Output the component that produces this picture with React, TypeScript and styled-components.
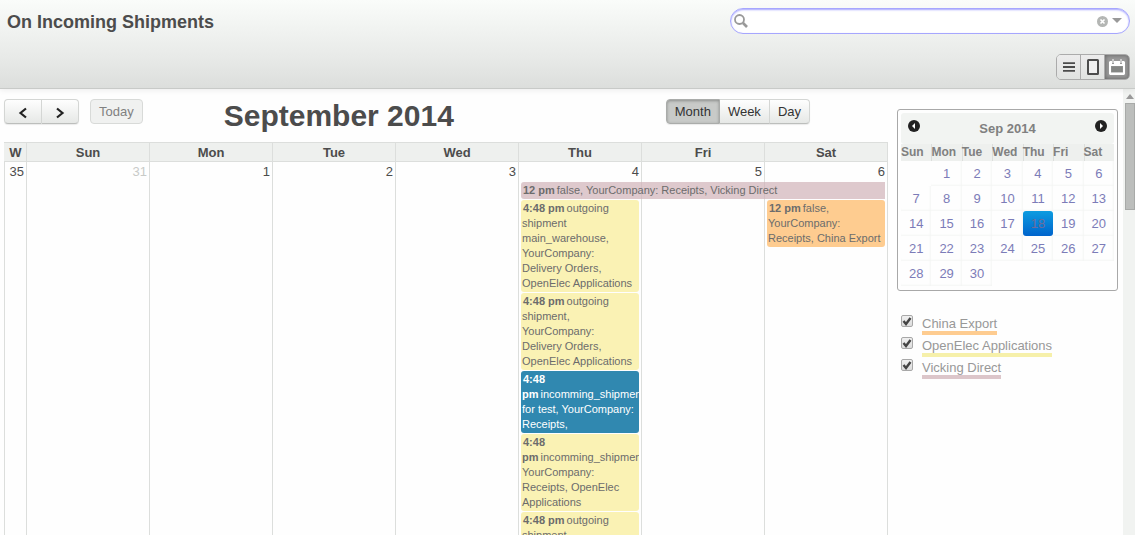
import React from "react";
import styled, { createGlobalStyle, css } from "styled-components";

const GlobalStyle = createGlobalStyle`
  *, *::before, *::after { box-sizing: border-box; }
  body {
    margin: 0;
    background: #fefefe;
    color: #4c4c4c;
    font-family: "Liberation Sans", Arial, sans-serif;
    font-size: 13px;
  }
  button, input { font: inherit; color: inherit; }
`;

const Page = styled.div`
  display: flex;
  flex-direction: column;
  height: 100vh;
  overflow: hidden;
`;

const Header = styled.header`
  flex: none;
  display: flex;
  flex-direction: column;
  gap: 20px;
  padding: 8px 5px;
  border-bottom: 1px solid #c8cac8;
  background: linear-gradient(to bottom, #fafcfa, #e8eae8 65%, #dcdedc);
  box-shadow: 0 1px 6px rgba(0, 0, 0, 0.08);
  z-index: 1;
`;

const HeaderRow = styled.div`
  display: flex;
  justify-content: space-between;
  align-items: flex-start;
  padding-left: 2px;
`;

const PageTitle = styled.h1`
  margin: 4px 0 0;
  font-size: 18px;
  line-height: 21px;
`;

const SearchBox = styled.div`
  display: flex;
  align-items: center;
  gap: 4px;
  width: 400px;
  height: 26px;
  padding: 0 7px 0 3px;
  border: 1px solid #a6a6fe;
  border-radius: 13px;
  background: #fff;
  box-shadow: inset 0 1px 2px #a6a6fe;
`;

const SearchInput = styled.input`
  flex: 1;
  min-width: 0;
  height: 20px;
  border: 0;
  padding: 0;
  background: transparent;
  outline: none;
`;

const IconButton = styled.button`
  display: flex;
  padding: 0;
  border: 0;
  background: none;
`;

const ViewSwitch = styled.div`
  display: flex;
  margin-left: auto;
  height: 26px;
  border: 1px solid #ababab;
  border-radius: 5px;
  overflow: hidden;
`;

const ViewButton = styled.button<{ $active?: boolean }>`
  display: flex;
  align-items: center;
  justify-content: center;
  width: 24px;
  padding: 0;
  border: 0;
  background: linear-gradient(to bottom, #ececec, #e0e2e0);
  &:first-child { width: 23px; }
  &:last-child { width: 25px; }
  & + & { border-left: 1px solid #ababab; }
  ${(p) => p.$active && css`
    background: #999;
    box-shadow: inset 0 0 4px rgba(0, 0, 0, 0.4);
  `}
`;

const Body = styled.div`
  flex: 1;
  min-height: 0;
  display: flex;
`;

const Content = styled.main`
  flex: 1;
  min-width: 0;
  display: flex;
  align-items: flex-start;
  gap: 9px;
  padding: 10px 5px 0 4px;
  overflow: hidden;
`;

const CalendarPane = styled.section`
  flex: 1;
  min-width: 0;
`;

const Toolbar = styled.div`
  display: flex;
  align-items: flex-start;
  height: 43px;
`;

const ButtonGroup = styled.div`
  display: flex;
  border-radius: 4px;
  box-shadow: 0 1px 1px rgba(0, 0, 0, 0.08);
`;

const ToolButton = styled.button<{ $active?: boolean; $wide?: boolean }>`
  display: flex;
  align-items: center;
  justify-content: center;
  height: 25px;
  padding: 0 ${(p) => (p.$wide ? 12 : 8)}px;
  border: 1px solid #d4d6d4;
  border-bottom-color: #bcbebc;
  background: linear-gradient(to bottom, #fefefe, #e6e8e6);
  color: #333;
  &:first-child { border-radius: 4px 0 0 4px; }
  &:last-child { border-radius: 0 4px 4px 0; }
  &:only-child { border-radius: 4px; }
  & + & { border-left: 0; }
  &:disabled {
    border-color: #d8dad8;
    background: #f0f1f0;
    color: #808080;
  }
  ${(p) => p.$active && css`
    border-color: #aaacaa;
    background: #c8cac8;
    box-shadow: inset 0 1px 3px rgba(0, 0, 0, 0.3);
  `}
`;

const TodaySlot = styled.div`
  margin-left: 11px;
`;

const MonthTitle = styled.h2`
  margin: 0 0 0 81px;
  font-size: 30px;
  line-height: 34px;
`;

const ModeSlot = styled.div`
  margin-left: auto;
  margin-right: 78px;
`;

const MonthTable = styled.table`
  width: 100%;
  table-layout: fixed;
  border-collapse: collapse;
`;

const WeekCol = styled.col`
  width: 22px;
`;

const HeadCell = styled.th`
  height: 19px;
  padding: 0;
  border: 1px solid #dcdedc;
  background: #eef0ee;
  line-height: 17px;
  &:first-child { border-left-color: #eef0ee; }
`;

const DayCell = styled.td<{ $muted?: boolean }>`
  height: 420px;
  padding: 1px 2px 0;
  border: 1px solid #dcdedc;
  vertical-align: top;
  ${(p) => p.$muted && css`color: #c8cac8;`}
`;

const DayNumber = styled.div`
  height: 19px;
  line-height: 17px;
  text-align: right;
`;

const EventList = styled.div<{ $offset?: boolean }>`
  display: flex;
  flex-direction: column;
  gap: 1px;
  padding-top: ${(p) => (p.$offset ? 18 : 0)}px;
`;

type Tone = "yellow" | "orange" | "pink" | "blue";

const tones: Record<Tone, string> = {
  yellow: "#faf2b4",
  orange: "#fecc90",
  pink: "rgba(208, 178, 184, 0.7)",
  blue: "#3088b0",
};

const EventCard = styled.a<{ $tone: Tone; $span?: number }>`
  position: relative;
  display: block;
  width: calc(${(p) => (p.$span ?? 1) * 100}% + ${(p) => ((p.$span ?? 1) - 1) * 5}px);
  padding: 1px 2px 1px 1px;
  border-radius: ${(p) => (p.$span ? "3px 0 0 3px" : "3px")};
  background: ${(p) => tones[p.$tone]};
  color: ${(p) => (p.$tone === "blue" ? "#fff" : "#6c6c6c")};
  font-size: 11px;
  line-height: 15px;
  text-decoration: none;
  overflow: hidden;
`;

const EventTime = styled.strong`
  padding: 0 2px 0 1px;
`;

const Sidebar = styled.aside`
  flex: none;
  width: 221px;
  padding-top: 10px;
`;

const MiniCalendar = styled.div`
  padding: 3px 3px 4px;
  border: 1px solid #a8a8a8;
  border-radius: 3px;
`;

const MiniHead = styled.div`
  display: flex;
  justify-content: space-between;
  height: 31px;
  padding: 7px 7px 0;
  border-radius: 3px;
  background: #f2f4f2;
  color: #808080;
  font-weight: bold;
  line-height: 18px;
`;

const MiniTable = styled.table`
  width: 100%;
  table-layout: fixed;
  border-collapse: collapse;
`;

const MiniHeadCell = styled.th`
  height: 17px;
  padding: 0;
  background: #eef0ee;
  color: #808080;
  font-size: 12px;
  line-height: 17px;
  text-align: left;
  box-shadow: inset 1px 0 #dcdedc;
  &:first-child { box-shadow: none; }
`;

const MiniCell = styled.td`
  height: 25px;
  padding: 0;
`;

const MiniDay = styled.a<{ $selected?: boolean }>`
  display: block;
  height: 25px;
  color: #7c7cb8;
  line-height: 25px;
  text-align: center;
  text-decoration: none;
  box-shadow: inset -1px -1px 2px #f4f6f4;
  ${(p) => p.$selected && css`
    border-radius: 3px;
    background: linear-gradient(to bottom, #0c9ce0, #0064cc);
    box-shadow: none;
    color: #6c6c9c;
  `}
`;

const Filters = styled.div`
  display: flex;
  flex-direction: column;
  gap: 2px;
  margin-top: 24px;
  padding-left: 4px;
`;

const Filter = styled.label`
  display: flex;
  align-items: flex-start;
  gap: 9px;
  height: 20px;
  color: #989898;
`;

const FilterCheck = styled.span`
  position: relative;
  display: flex;
  width: 12px;
  height: 12px;
  svg { position: absolute; left: 0; top: 0; pointer-events: none; }
`;

const FilterInput = styled.input`
  appearance: none;
  width: 12px;
  height: 12px;
  margin: 0;
  border: 1px solid #a8a8a8;
  border-radius: 2px;
  background: linear-gradient(to bottom, #f0f0f0, #dcdcdc);
`;

const FilterName = styled.span<{ $color: string }>`
  height: 20px;
  border-bottom: 4px solid ${(p) => p.$color};
  line-height: 18px;
`;

const ScrollTrack = styled.div`
  flex: none;
  display: flex;
  flex-direction: column;
  align-items: center;
  width: 12px;
  padding: 5px 0 0 2px;
  background: #f1f3f1;
`;

const ScrollThumb = styled.div`
  width: 10px;
  height: 107px;
  margin-top: 4px;
  border: 1px solid #a8aaa8;
  background: #bcbebc;
`;

const ChevronIcon = ({ next }: { next?: boolean }) => (
  <svg width="12" height="14" viewBox="0 0 12 14" fill="none" stroke="#222" strokeWidth="2.2">
    <path d={next ? "M3 3.5 8.5 8 3 12.5" : "M9 3.5 3.5 8 9 12.5"} />
  </svg>
);

const CircleArrow = ({ next }: { next?: boolean }) => (
  <svg width="12" height="12" viewBox="0 0 12 12">
    <circle cx="6" cy="6" r="6" fill="#222" />
    <path d={next ? "M5 3v6l3-3z" : "M7 3v6L4 6z"} fill="#fff" />
  </svg>
);

type CalendarEvent = { time: string; text: string; tone: Tone; span?: number };

const thursday: CalendarEvent[] = [
  { time: "12 pm", text: "false, YourCompany: Receipts, Vicking Direct", tone: "pink", span: 3 },
  { time: "4:48 pm", text: "outgoing shipment main_warehouse, YourCompany: Delivery Orders, OpenElec Applications", tone: "yellow" },
  { time: "4:48 pm", text: "outgoing shipment, YourCompany: Delivery Orders, OpenElec Applications", tone: "yellow" },
  { time: "4:48 pm", text: "incomming_shipment for test, YourCompany: Receipts,", tone: "blue" },
  { time: "4:48 pm", text: "incomming_shipment, YourCompany: Receipts, OpenElec Applications", tone: "yellow" },
  { time: "4:48 pm", text: "outgoing shipment", tone: "yellow" },
];

const saturday: CalendarEvent[] = [
  { time: "12 pm", text: "false, YourCompany: Receipts, China Export", tone: "orange" },
];

const days: { label: string; number: number; muted?: boolean; events?: CalendarEvent[]; offset?: boolean }[] = [
  { label: "Sun", number: 31, muted: true },
  { label: "Mon", number: 1 },
  { label: "Tue", number: 2 },
  { label: "Wed", number: 3 },
  { label: "Thu", number: 4, events: thursday },
  { label: "Fri", number: 5 },
  { label: "Sat", number: 6, events: saturday, offset: true },
];

const filters = [
  { name: "China Export", color: "#fecc90" },
  { name: "OpenElec Applications", color: "#f6f0aa" },
  { name: "Vicking Direct", color: "#dcc6ca" },
];

const weeks = [0, 1, 2, 3, 4].map((w) => [0, 1, 2, 3, 4, 5, 6].map((d) => w * 7 + d));

export default function App() {
  return (
    <Page>
      <GlobalStyle />
      <Header>
        <HeaderRow>
          <PageTitle>On Incoming Shipments</PageTitle>
          <SearchBox>
            <svg width="14" height="14" viewBox="0 0 14 14" fill="none" stroke="#999">
              <circle cx="5.5" cy="5.5" r="4.5" strokeWidth="1.8" />
              <path d="m9 9 4 4" strokeWidth="2.6" />
            </svg>
            <SearchInput type="text" aria-label="Search" />
            <IconButton aria-label="Clear search">
              <svg width="11" height="11" viewBox="0 0 11 11">
                <circle cx="5.5" cy="5.5" r="5.5" fill="#b4b6b4" />
                <path d="m3.5 3.5 4 4m0-4-4 4" stroke="#fff" strokeWidth="1.6" />
              </svg>
            </IconButton>
            <IconButton aria-label="Advanced search">
              <svg width="10" height="6" viewBox="0 0 10 6">
                <path d="M0 0h10L5 5z" fill="#999" />
              </svg>
            </IconButton>
          </SearchBox>
        </HeaderRow>
        <ViewSwitch>
          <ViewButton aria-label="List">
            <svg width="12" height="10" viewBox="0 0 12 10" stroke="#4c4c4c" strokeWidth="1.8">
              <path d="M0 1.2h12M0 5h12M0 8.8h12" />
            </svg>
          </ViewButton>
          <ViewButton aria-label="Form">
            <svg width="12" height="16" viewBox="0 0 12 16" fill="#f0f0f0" stroke="#4c4c4c" strokeWidth="2">
              <rect x="1" y="1" width="10" height="14" rx="0.5" />
            </svg>
          </ViewButton>
          <ViewButton aria-label="Calendar" $active>
            <svg width="16" height="16" viewBox="0 0 16 16">
              <path fill="#fff" fillRule="evenodd" d="M1 2h2v3h2V2h6v3h2V2h2l1 1v12l-1 1H1l-1-1V3zM2 7v6.500h12V7z" />
              <path fill="#fff" d="M3.500 0h1v4h-1zM11.500 0h1v4h-1z" />
              <path fill="#848684" d="M2.500 7.500h11V13h-11z" />
            </svg>
          </ViewButton>
        </ViewSwitch>
      </Header>
      <Body>
        <Content>
          <CalendarPane>
            <Toolbar>
              <ButtonGroup>
                <ToolButton $wide aria-label="Previous"><ChevronIcon /></ToolButton>
                <ToolButton $wide aria-label="Next"><ChevronIcon next /></ToolButton>
              </ButtonGroup>
              <TodaySlot>
                <ToolButton disabled>Today</ToolButton>
              </TodaySlot>
              <MonthTitle>September 2014</MonthTitle>
              <ModeSlot>
                <ButtonGroup>
                  <ToolButton $active>Month</ToolButton>
                  <ToolButton>Week</ToolButton>
                  <ToolButton>Day</ToolButton>
                </ButtonGroup>
              </ModeSlot>
            </Toolbar>
            <MonthTable>
              <colgroup>
                <WeekCol />
                {days.map((d) => <col key={d.label} />)}
              </colgroup>
              <thead>
                <tr>
                  <HeadCell>W</HeadCell>
                  {days.map((d) => <HeadCell key={d.label}>{d.label}</HeadCell>)}
                </tr>
              </thead>
              <tbody>
                <tr>
                  <DayCell><DayNumber>35</DayNumber></DayCell>
                  {days.map((d) => (
                    <DayCell key={d.label} $muted={d.muted}>
                      <DayNumber>{d.number}</DayNumber>
                      {d.events && (
                        <EventList $offset={d.offset}>
                          {d.events.map((e, i) => (
                            <EventCard key={i} href="#" $tone={e.tone} $span={e.span}>
                              <EventTime>{e.time}</EventTime>{e.text}
                            </EventCard>
                          ))}
                        </EventList>
                      )}
                    </DayCell>
                  ))}
                </tr>
              </tbody>
            </MonthTable>
          </CalendarPane>
          <Sidebar>
            <MiniCalendar>
              <MiniHead>
                <IconButton aria-label="Previous month"><CircleArrow /></IconButton>
                <span>Sep 2014</span>
                <IconButton aria-label="Next month"><CircleArrow next /></IconButton>
              </MiniHead>
              <MiniTable>
                <thead>
                  <tr>{days.map((d) => <MiniHeadCell key={d.label}>{d.label}</MiniHeadCell>)}</tr>
                </thead>
                <tbody>
                  {weeks.map((week, w) => (
                    <tr key={w}>
                      {week.map((n) => (
                        <MiniCell key={n}>
                          {n > 0 && n <= 30 && <MiniDay href="#" $selected={n === 18}>{n}</MiniDay>}
                        </MiniCell>
                      ))}
                    </tr>
                  ))}
                </tbody>
              </MiniTable>
            </MiniCalendar>
            <Filters>
              {filters.map((f) => (
                <Filter key={f.name}>
                  <FilterCheck>
                    <FilterInput type="checkbox" defaultChecked />
                    <svg width="12" height="12" viewBox="0 0 12 12" fill="none" stroke="#444" strokeWidth="2.4">
                      <path d="m2.5 6 2.5 3 4.5-6" />
                    </svg>
                  </FilterCheck>
                  <FilterName $color={f.color}>{f.name}</FilterName>
                </Filter>
              ))}
            </Filters>
          </Sidebar>
        </Content>
        <ScrollTrack>
          <svg width="8" height="5" viewBox="0 0 8 5"><path d="M0 5h8L4 0z" fill="#999" /></svg>
          <ScrollThumb />
        </ScrollTrack>
      </Body>
    </Page>
  );
}
